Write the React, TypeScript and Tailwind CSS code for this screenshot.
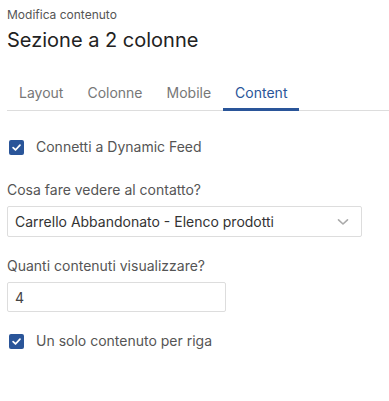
import React, { useState } from 'react';

const tabs = ['Layout', 'Colonne', 'Mobile', 'Content'];

function CheckBox({ checked, onChange, label }: { checked: boolean; onChange: () => void; label: string }) {
  return (
    <label className="flex items-center h-[20px] cursor-pointer" onClick={onChange}>
      <span
        className={`ml-[2px] flex items-center justify-center w-[15px] h-[15px] rounded-[2px] ${
          checked ? 'bg-[#2a5599]' : 'border border-[#999] bg-white'
        }`}
      >
        {checked && (
          <svg width="11" height="11" viewBox="0 0 12 12" fill="none">
            <path d="M2.3 6.2 L4.9 8.7 L9.8 3.4" stroke="white" strokeWidth="1.9" strokeLinecap="round" strokeLinejoin="round" />
          </svg>
        )}
      </span>
      <span className="ml-[12px] text-[14px] leading-[20px] text-[#555]">{label}</span>
    </label>
  );
}

export default function App() {
  const [active, setActive] = useState('Content');
  const [dynamic, setDynamic] = useState(true);
  const [single, setSingle] = useState(true);
  const [count, setCount] = useState('4');

  return (
    <div className="w-[389px] h-[401px] bg-white px-[7px] pt-[6px] font-['Inter','Noto_Sans',sans-serif]">
      <p className="text-[12px] leading-[18px] text-[#555]">Modifica contenuto</p>
      <h1 className="mt-[2px] text-[20px] leading-[28px] text-[#222]">Sezione a 2 colonne</h1>

      {/* tabs */}
      <div className="mt-[18px] -mr-[7px] flex border-b border-[#ddd]">
        {tabs.map((t) => (
          <button
            key={t}
            onClick={() => setActive(t)}
            className={`-mb-px px-[12px] pt-[11px] pb-[5px] text-[14px] leading-[20px] border-b-[3px] ${
              active === t ? 'border-[#2a5599] text-[#2a5599]' : 'border-transparent text-[#777]'
            }`}
          >
            {t}
          </button>
        ))}
      </div>

      <div className="mt-[26px]">
        <CheckBox checked={dynamic} onChange={() => setDynamic(!dynamic)} label="Connetti a Dynamic Feed" />
      </div>

      <p className="mt-[23px] text-[14px] leading-[20px] text-[#555]">Cosa fare vedere al contatto?</p>
      <div className="mt-[6px] w-[355px] h-[31px] border border-[#ddd] rounded-[2px] flex items-center justify-between pl-[7px] pr-[12px]">
        <span className="text-[14px] leading-[20px] text-[#333]">Carrello Abbandonato - Elenco prodotti</span>
        <svg width="12" height="8" viewBox="0 0 12 8" fill="none">
          <path d="M1.5 1.8 L6 6 L10.5 1.8" stroke="#aaa" strokeWidth="1.6" strokeLinecap="round" strokeLinejoin="round" />
        </svg>
      </div>

      <p className="mt-[19px] text-[14px] leading-[20px] text-[#555]">Quanti contenuti visualizzare?</p>
      <input
        value={count}
        onChange={(e) => setCount(e.target.value)}
        className="mt-[6px] block w-[219px] h-[30px] border border-[#ddd] rounded-[2px] px-[7px] text-[14px] text-[#444] outline-none"
      />

      <div className="mt-[19px]">
        <CheckBox checked={single} onChange={() => setSingle(!single)} label="Un solo contenuto per riga" />
      </div>
    </div>
  );
}
